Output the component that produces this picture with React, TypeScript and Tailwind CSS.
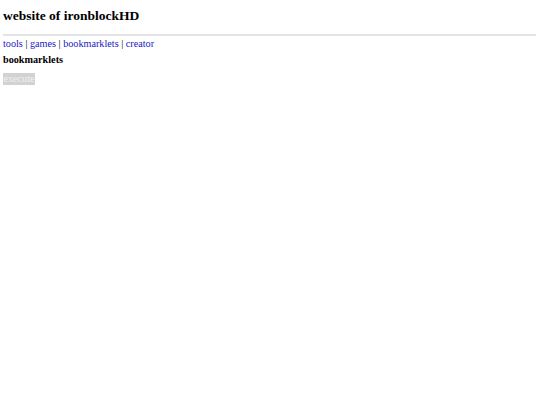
export default function App() {
  return (
    <div className="min-h-screen bg-white px-[3px] pt-[8px] text-black" style={{ fontFamily: '"Liberation Serif", "Times New Roman", serif' }}>
      <h2 className="text-[13.5px] font-bold leading-[16px]">website of ironblockHD</h2>
      <hr className="mt-[10px] mb-[2px] mr-px border-0 h-[2px] bg-[#e4e4e4]" />
      <nav className="text-[10.2px] leading-[12px] text-black">
        <a href="#" className="text-[#2020c0]">tools</a>
        <span> | </span>
        <a href="#" className="text-[#2020c0]">games</a>
        <span> | </span>
        <a href="#" className="text-[#2020c0]">bookmarklets</a>
        <span> | </span>
        <a href="#" className="text-[#2020c0]">creator</a>
      </nav>
      <h3 className="mt-[4px] text-[10.2px] font-bold leading-[12px]">bookmarklets</h3>
      <button disabled className="mt-[7px] block h-[12px] w-[32px] px-0 bg-[#d2d2d2] text-center text-[10.2px] leading-[12px] text-[#f0f0f0]">
        execute
      </button>
    </div>
  );
}
